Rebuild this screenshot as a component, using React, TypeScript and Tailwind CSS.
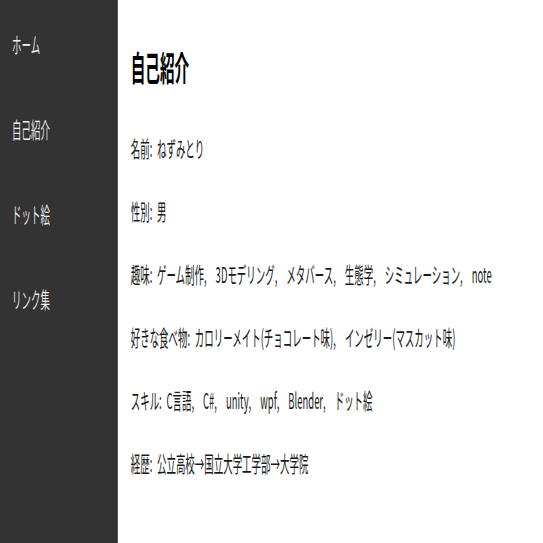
const navItems = ['ホーム', '自己紹介', 'ドット絵', 'リンク集'];

const profile: { label: string; values: string[] }[] = [
  { label: '名前', values: ['ねずみとり'] },
  { label: '性別', values: ['男'] },
  { label: '趣味', values: ['ゲーム制作', '3Dモデリング', 'メタバース', '生態学', 'シミュレーション', 'note'] },
  { label: '好きな食べ物', values: ['カロリーメイト(チョコレート味)', 'インゼリー(マスカット味)'] },
  { label: 'スキル', values: ['C言語', 'C#', 'unity', 'wpf', 'Blender', 'ドット絵'] },
  { label: '経歴', values: ['公立高校→国立大学工学部→大学院'] },
];

export default function App() {
  return (
    <div className="w-[543px] h-[543px] overflow-hidden bg-white">
      {/* the page is squeezed sideways, so lay it out wide and scale it down */}
      <div
        className="flex w-[1263px] h-[543px] origin-top-left scale-x-[0.43]"
        style={{ fontFamily: '"Noto Sans CJK JP", "Liberation Sans", sans-serif' }}
      >
        {/* Sidebar */}
        <nav className="w-[274px] h-full shrink-0 bg-[#333333] pl-[28px] pt-[28px] flex flex-col gap-[55px]">
          {navItems.map((item) => (
            <a key={item} className="text-[22px] leading-[30px] font-[350] text-[#f2f2f2] whitespace-nowrap">
              {item}
            </a>
          ))}
        </nav>

        {/* Content */}
        <main className="flex-1 pl-[30px] pt-[47px] text-black">
          <h1 className="text-[34px] leading-[40px] font-bold">自己紹介</h1>
          <div className="mt-[45px] flex flex-col gap-[33px]">
            {profile.map((row) => (
              <p
                key={row.label}
                className="text-[22px] leading-[30px] font-normal text-[#1a1a1a] whitespace-nowrap [word-spacing:6px]"
              >
                {row.label}: {row.values.map((v, i) => (
                  <span key={v}>
                    {i > 0 && <span className="[word-spacing:16px]">, </span>}
                    {v}
                  </span>
                ))}
              </p>
            ))}
          </div>
        </main>
      </div>
    </div>
  );
}
